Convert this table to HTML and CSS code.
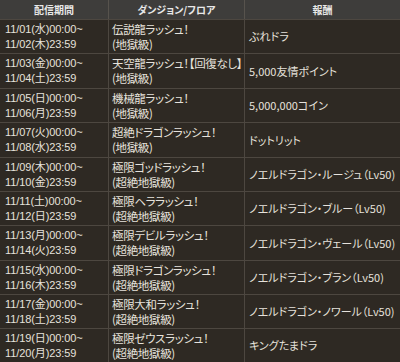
FILE: index.html
```html
<!DOCTYPE html>
<html lang="ja">
<head>
<meta charset="utf-8">
<link rel="stylesheet" href="styles.css">
</head>
<body>
<div class="sched">
  <div class="row head"><div class="cell">配信期間</div><div class="cell">ダンジョン/フロア</div><div class="cell">報酬</div></div>
  <div class="row"><div class="cell date">11/01(水)00:00~<br>11/02(木)23:59</div><div class="cell dun">伝説龍ラッシュ！<br>(地獄級)</div><div class="cell">ぶれドラ</div></div>
  <div class="row tall"><div class="cell date">11/03(金)00:00~<br>11/04(土)23:59</div><div class="cell dun">天空龍ラッシュ！【回復なし】<br>(地獄級)</div><div class="cell">5,000友情ポイント</div></div>
  <div class="row"><div class="cell date">11/05(日)00:00~<br>11/06(月)23:59</div><div class="cell dun">機械龍ラッシュ！<br>(地獄級)</div><div class="cell">5,000,000コイン</div></div>
  <div class="row tall"><div class="cell date">11/07(火)00:00~<br>11/08(水)23:59</div><div class="cell dun">超絶ドラゴンラッシュ！<br>(地獄級)</div><div class="cell">ドットリット</div></div>
  <div class="row"><div class="cell date">11/09(木)00:00~<br>11/10(金)23:59</div><div class="cell dun">極限ゴッドラッシュ！<br>(超絶地獄級)</div><div class="cell">ノエルドラゴン・ルージュ（Lv50)</div></div>
  <div class="row"><div class="cell date">11/11(土)00:00~<br>11/12(日)23:59</div><div class="cell dun">極限ヘララッシュ！<br>(超絶地獄級)</div><div class="cell">ノエルドラゴン・ブルー（Lv50)</div></div>
  <div class="row tall"><div class="cell date">11/13(月)00:00~<br>11/14(火)23:59</div><div class="cell dun">極限デビルラッシュ！<br>(超絶地獄級)</div><div class="cell">ノエルドラゴン・ヴェール（Lv50)</div></div>
  <div class="row"><div class="cell date">11/15(水)00:00~<br>11/16(木)23:59</div><div class="cell dun">極限ドラゴンラッシュ！<br>(超絶地獄級)</div><div class="cell">ノエルドラゴン・ブラン（Lv50)</div></div>
  <div class="row"><div class="cell date">11/17(金)00:00~<br>11/18(土)23:59</div><div class="cell dun">極限大和ラッシュ！<br>(超絶地獄級)</div><div class="cell">ノエルドラゴン・ノワール（Lv50)</div></div>
  <div class="row"><div class="cell date">11/19(日)00:00~<br>11/20(月)23:59</div><div class="cell dun">極限ゼウスラッシュ！<br>(超絶地獄級)</div><div class="cell">キングたまドラ</div></div>
</div>
</body>
</html>
```

FILE: styles.css
```css
html, body {
  margin: 0;
  padding: 0;
  background: #2e2923;
}
.sched {
  width: 400px;
  font-family: "Noto Sans CJK JP", "Noto Sans", sans-serif;
  font-size: 11px;
  font-feature-settings: "palt";
  color: #e6e2dc;
}
.row {
  display: grid;
  grid-template-columns: 108px 136px 156px;
  height: 34px;
  box-sizing: border-box;
  border-top: 1px solid #4d4740;
}
.row.tall { height: 35px; }
.row.head {
  height: 19px;
  border-top: none;
  background: #3e3d3b;
}
.cell {
  display: flex;
  flex-direction: column;
  justify-content: center;
  padding: 0 2px 0 4px;
  line-height: 15px;
  white-space: nowrap;
  overflow: hidden;
  border-left: 1px solid #4d4740;
}
.cell:first-child { border-left: none; padding-left: 5px; }
.cell.date {
  display: block;
  padding-top: 2px;
  font-family: "Liberation Sans", "Noto Sans CJK JP", sans-serif;
  letter-spacing: -0.1px;
}
.cell.dun {
  padding-left: 3px;
  font-size: 11.5px;
  letter-spacing: -0.35px;
}
.head .cell {
  align-items: center;
  padding: 0;
  font-size: 10px;
  font-weight: bold;
  color: #e8e8e8;
  border-left-color: #57534d;
}
.head .cell:first-child { padding: 0; }
```
